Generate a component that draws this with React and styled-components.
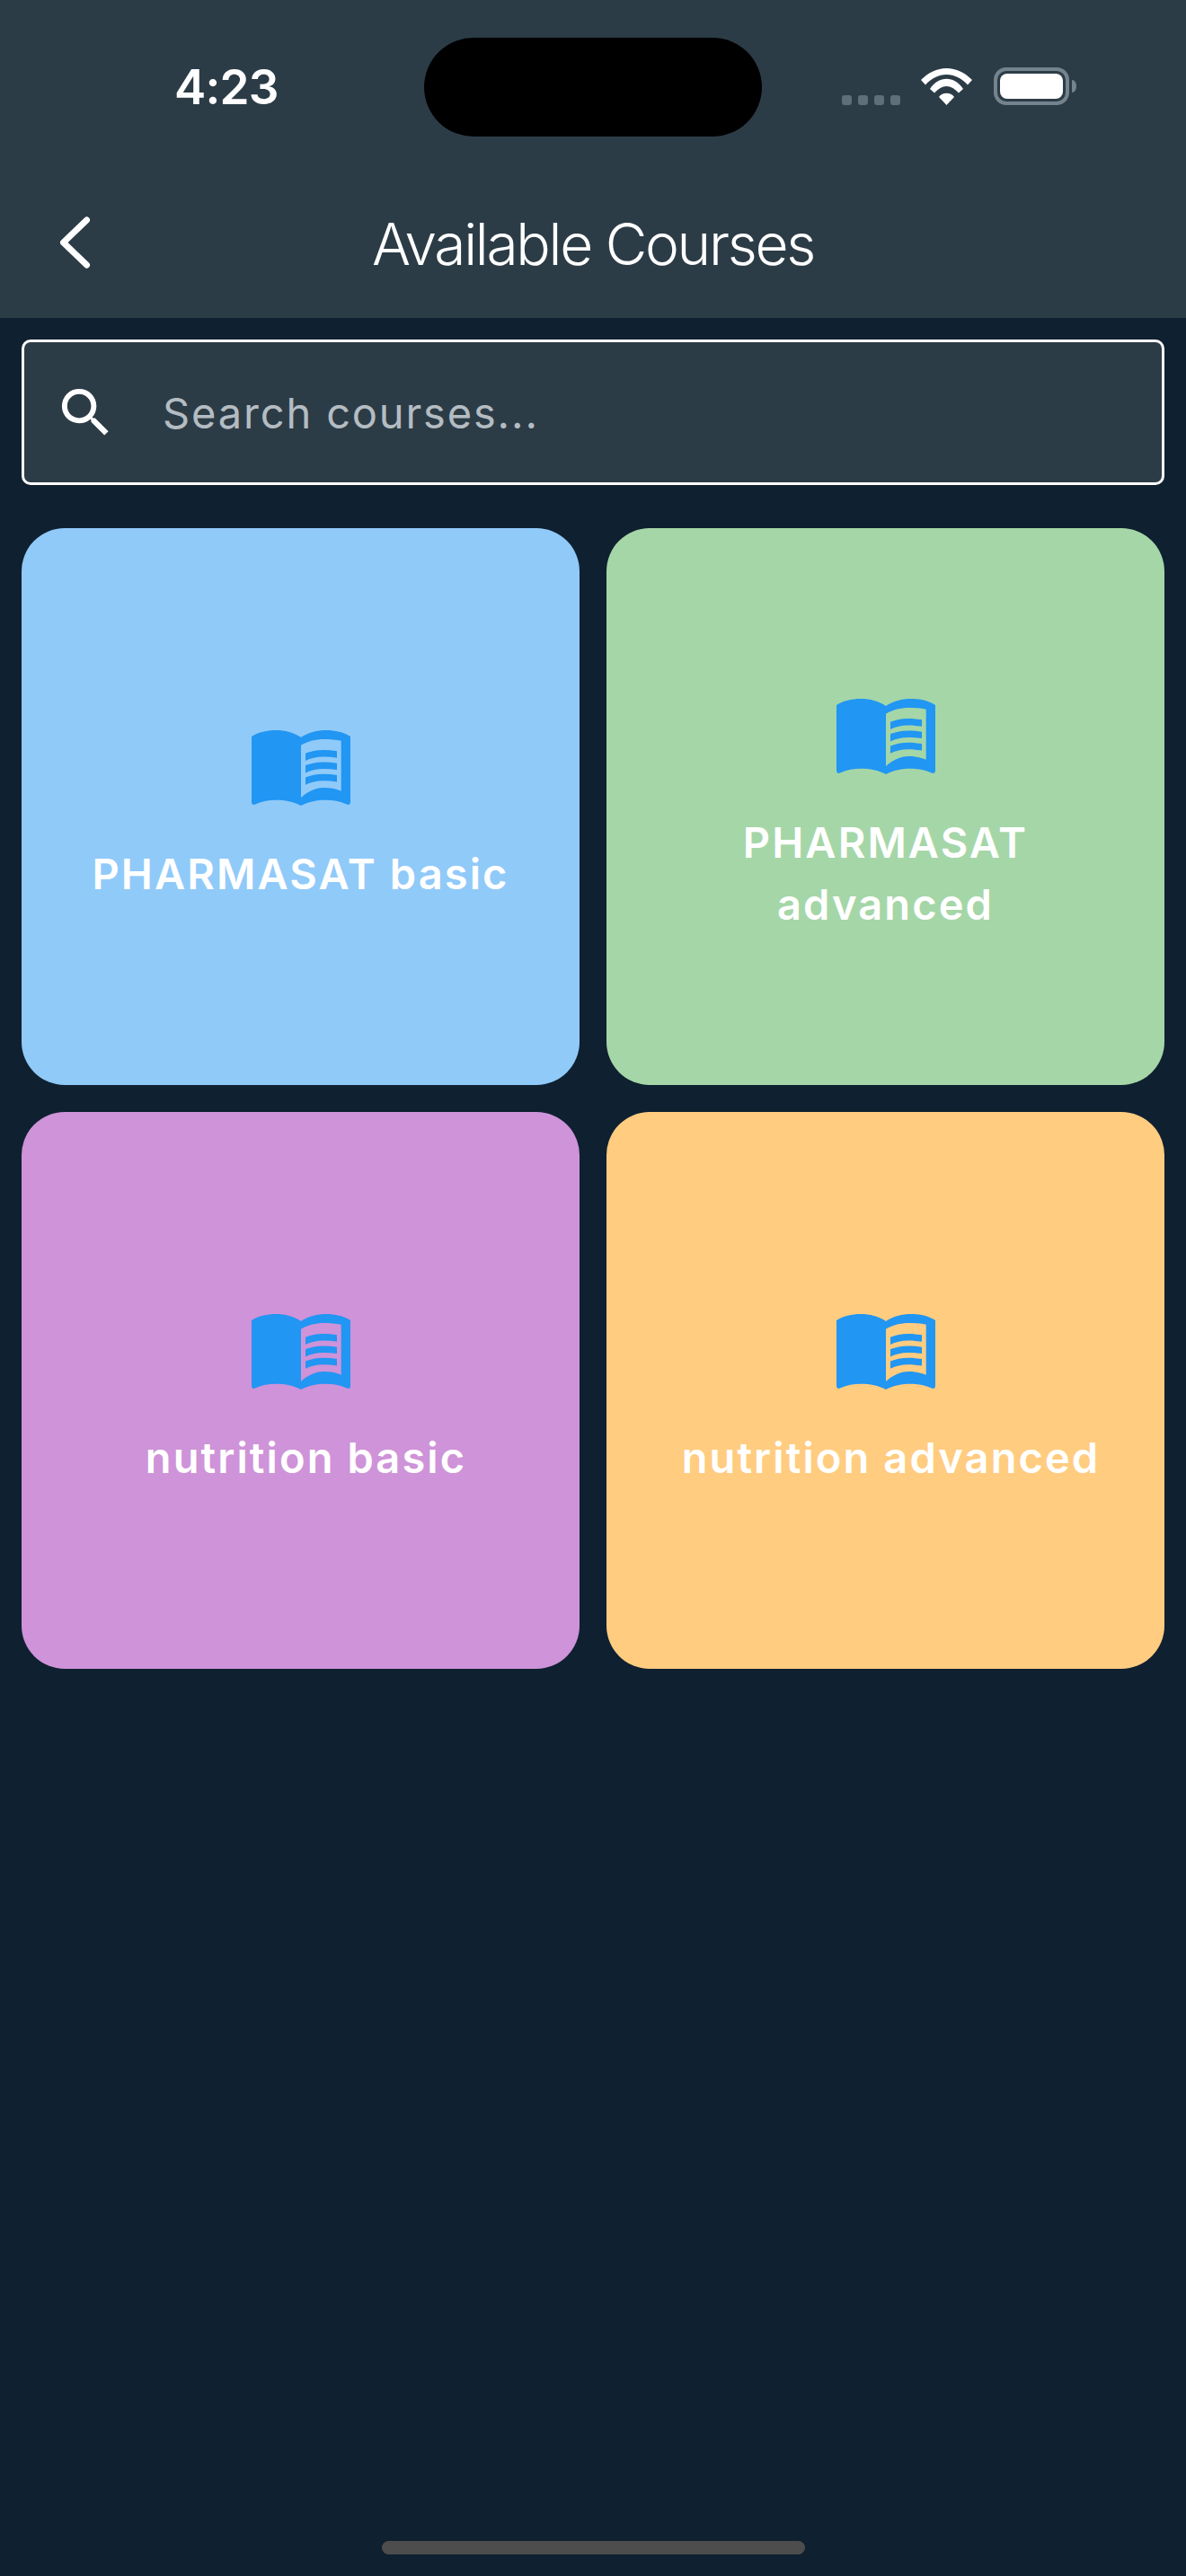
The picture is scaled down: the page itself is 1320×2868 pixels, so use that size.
import styled, { createGlobalStyle } from 'styled-components';

const courses = [
  { title: 'PHARMASAT basic', color: '#90caf9', shift: 0 },
  { title: 'PHARMASAT advanced', color: '#a5d6a7', shift: 0 },
  { title: 'nutrition basic', color: '#ce93d8', shift: 12 },
  { title: 'nutrition advanced', color: '#ffcc80', shift: 12 },
];

const GlobalStyle = createGlobalStyle`
  html, body {
    margin: 0;
    padding: 0;
    background: #0f2030;
  }
`;

const Page = styled.div`
  position: relative;
  width: 1320px;
  height: 2868px;
  overflow: hidden;
  background: #0f2030;
  font-family: Inter, "Liberation Sans", sans-serif;
  color: #fff;
`;

const Header = styled.header`
  height: 354px;
  background: #2c3c47;
  display: flex;
  flex-direction: column;
`;

const StatusBar = styled.div`
  height: 204px;
  display: grid;
  grid-template-columns: 472px 376px 1fr;
  padding-top: 42px;
  box-sizing: border-box;
`;

const Clock = styled.div`
  height: 110px;
  padding-left: 194px;
  font-size: 53px;
  font-weight: 600;
  line-height: 110px;
  letter-spacing: -0.8px;
`;

const Island = styled.div`
  height: 110px;
  border-radius: 55px;
  background: #000;
`;

const StatusIcons = styled.div`
  display: flex;
  align-items: flex-start;
  padding: 33px 0 0 89px;
`;

const Dots = styled.div`
  display: flex;
  gap: 7px;
  margin-top: 31px;
  margin-right: 23px;
`;

const Dot = styled.span`
  width: 11px;
  height: 11px;
  border-radius: 3px;
  background: #5f6f7a;
`;

const WifiIcon = styled.svg`
  margin-top: 1px;
`;

const BatteryIcon = styled.svg`
  margin-left: 24px;
`;

const NavBar = styled.div`
  position: relative;
  height: 150px;
  display: flex;
  align-items: center;
  justify-content: center;
  padding-bottom: 16px;
  box-sizing: border-box;
`;

const BackButton = styled.svg`
  position: absolute;
  left: 66px;
  top: 37px;
`;

const Title = styled.h1`
  margin: 0;
  font-size: 64px;
  font-weight: 300;
  letter-spacing: -2.3px;
`;

const Content = styled.main`
  padding: 24px 24px 0;
`;

const SearchBox = styled.div`
  height: 162px;
  box-sizing: border-box;
  border: 3px solid #fff;
  border-radius: 10px;
  background: #2c3c47;
  display: flex;
  align-items: center;
  padding-left: 33px;
  gap: 50px;
`;

const SearchText = styled.span`
  font-size: 47px;
  letter-spacing: 1.85px;
  color: #b4bcc2;
`;

const Grid = styled.div`
  margin-top: 48px;
  display: grid;
  grid-template-columns: 621px 621px;
  gap: 30px;
`;

const Card = styled.div`
  height: 620px;
  border-radius: 48px;
  background: ${(p) => p.$color};
  display: flex;
  flex-direction: column;
  align-items: center;
  justify-content: center;
  padding: 23px 48px 0;
  box-sizing: border-box;
`;

const CardTitle = styled.div`
  margin-top: 41px;
  padding-left: ${(p) => p.$shift}px;
  font-size: 47px;
  font-weight: 600;
  line-height: 69px;
  letter-spacing: 2.1px;
  text-align: center;
`;

const HomeBar = styled.div`
  position: absolute;
  left: 425px;
  top: 2829px;
  width: 471px;
  height: 15px;
  border-radius: 8px;
  background: #4d4d4d;
`;

const BookIcon = ({ color }) => (
  <svg width="110" height="84" viewBox="0 0 110 84">
    <path
      fill="#2196f3"
      d="M0 7C8 2 17 0 27 0C37 0 47 2.5 55 8C63 2.5 73 0 83 0C93 0 102 2 110 7V80C110 82.5 108 83.5 106 82.5C98 79 91 77.7 83 77.7C73 77.7 63 79.5 55 84C47 79.5 37 77.7 27 77.7C19 77.7 12 79 4 82.5C2 83.5 0 82.5 0 80Z"
    />
    <path
      fill={color}
      d="M55 16.7C63 12 72 10 80 10C87 10 94 10.5 99.7 11.7V67.7C94 65 87 64 80 64C71 64 63 68 55 75Z"
    />
    <path
      fill="#2196f3"
      d="M60 25.7C66 23.5 72 22 80 22C85 22 90 22.5 95 23.3V30.7C90 30 85 29.5 80 29.5C72 29.5 66 31 60 34ZM60 39.1C66 36.9 72 35.4 80 35.4C85 35.4 90 35.9 95 36.7V44.1C90 43.4 85 42.9 80 42.9C72 42.9 66 44.4 60 47.4ZM60 52.5C66 50.3 72 48.8 80 48.8C85 48.8 90 49.3 95 50.1V57.5C90 56.8 85 56.3 80 56.3C72 56.3 66 57.8 60 60.8Z"
    />
  </svg>
);

const App = () => {
  return (
    <Page>
      <GlobalStyle />
      <Header>
        <StatusBar>
          <Clock>4:23</Clock>
          <Island />
          <StatusIcons>
            <Dots>
              <Dot />
              <Dot />
              <Dot />
              <Dot />
            </Dots>
            <WifiIcon width="57" height="41" viewBox="0 0 57 41">
              <path fill="#fff" d="M0 13C8 5 18 0 28.5 0C39 0 49 5 57 13L52 18.5C45 11 37 7 28.5 7C20 7 12 11 5 18.5Z" />
              <path fill="#fff" d="M10 23C15 15 22 11.7 28.5 11.7C35 11.7 42 15 47 23L42 27.5C38 23 33 20 28.5 20C24 20 19 23 15 27.5Z" />
              <path fill="#fff" d="M20 32C22 29 25 27.7 28.5 27.7C32 27.7 35 29 37 32L28.5 41Z" />
            </WifiIcon>
            <BatteryIcon width="92" height="42" viewBox="0 0 92 42">
              <rect x="2" y="2" width="80" height="38" rx="12" fill="none" stroke="#74838d" strokeWidth="4" />
              <rect x="7" y="7" width="70" height="28" rx="8" fill="#fff" />
              <path fill="#74838d" d="M87 14C90 14 92 17 92 21C92 25 90 28 87 28Z" />
            </BatteryIcon>
          </StatusIcons>
        </StatusBar>
        <NavBar>
          <BackButton width="36" height="60" viewBox="0 0 36 60">
            <path d="M30.5 4L4.5 29L30.5 54" fill="none" stroke="#fff" strokeWidth="7" strokeLinecap="round" strokeLinejoin="round" />
          </BackButton>
          <Title>Available Courses</Title>
        </NavBar>
      </Header>
      <Content>
        <SearchBox>
          <svg width="71" height="71" viewBox="0 0 24 24">
            <path
              fill="#fff"
              d="M15.5 14h-.79l-.28-.27A6.47 6.47 0 0 0 16 9.5 6.5 6.5 0 1 0 9.5 16c1.61 0 3.09-.59 4.23-1.57l.27.28v.79l5 4.99L20.49 19l-4.99-5zm-6 0C7.01 14 5 11.99 5 9.5S7.01 5 9.5 5 14 7.01 14 9.5 11.99 14 9.5 14z"
            />
          </svg>
          <SearchText>Search courses...</SearchText>
        </SearchBox>
        <Grid>
          {courses.map((course) => (
            <Card key={course.title} $color={course.color}>
              <BookIcon color={course.color} />
              <CardTitle $shift={course.shift}>{course.title}</CardTitle>
            </Card>
          ))}
        </Grid>
      </Content>
      <HomeBar />
    </Page>
  );
};

export default App;
